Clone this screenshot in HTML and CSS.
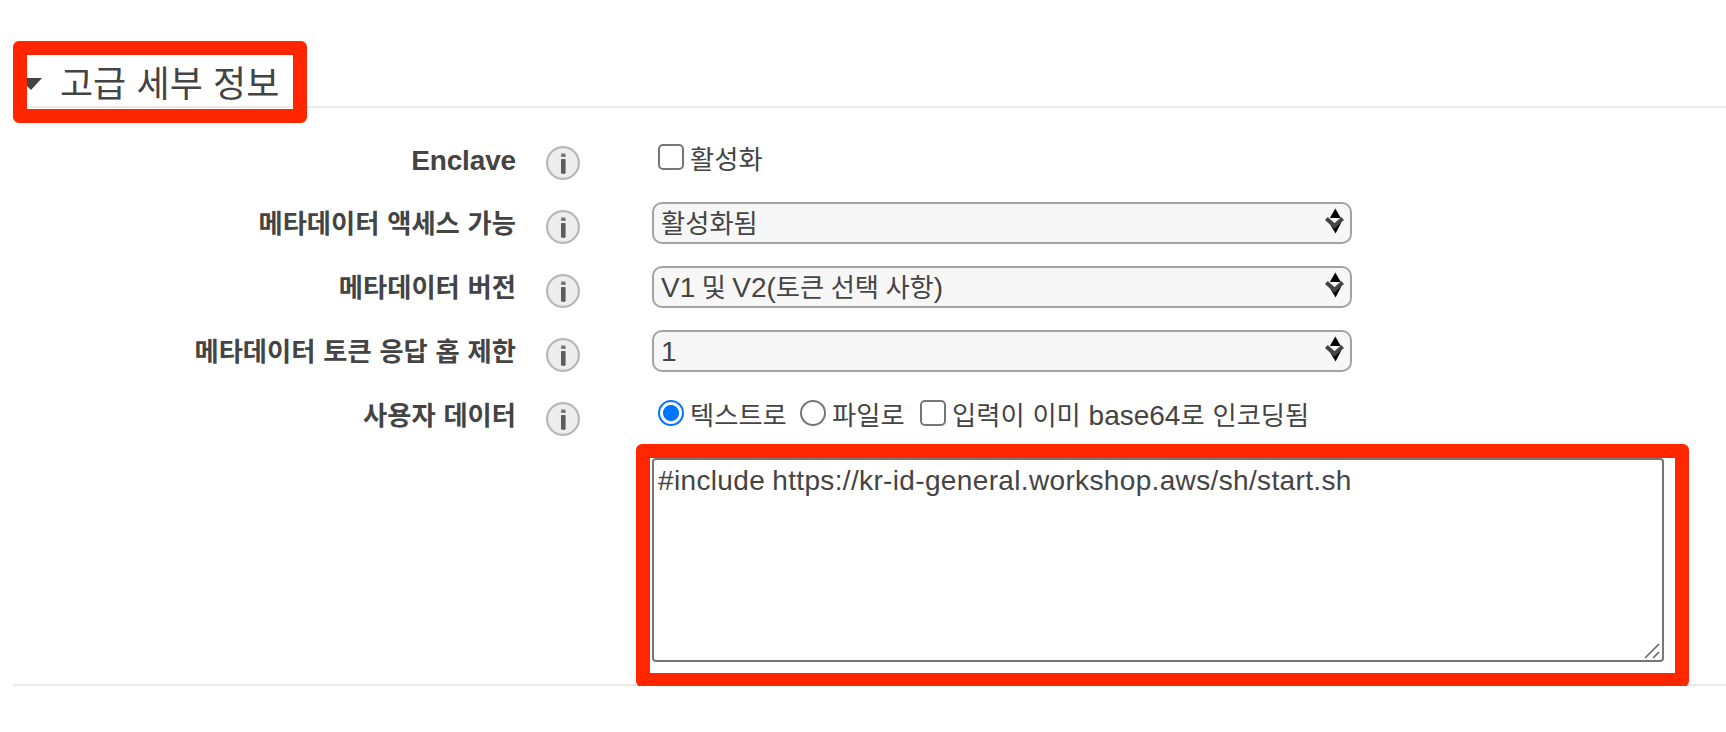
FILE: index.html
```html
<!DOCTYPE html>
<html lang="ko">
<head>
<meta charset="utf-8">
<title>고급 세부 정보</title>
<link rel="stylesheet" href="styles.css">
</head>
<body>
<svg class="defs" width="0" height="0">
  <symbol id="info" viewBox="0 0 34 34">
    <circle cx="17" cy="17" r="15.9" fill="#ededed" stroke="#b8b8b8" stroke-width="2.2"/>
    <rect x="15" y="7.6" width="4.6" height="3.4" rx="1" fill="#777"/>
    <rect x="15" y="13" width="4.6" height="14.8" rx="1" fill="#5c5c5c"/>
  </symbol>
  <symbol id="arrows" viewBox="0 0 20 26">
    <path d="M10.3 0.5 15.8 10H4.8z" fill="#000"/>
    <path d="M4 14.5H16.3L10.6 25.5z" fill="#000"/>
    <path d="M4 10H16L10 16z" fill="#f7f7f7"/>
    <path d="M1.4 10.6 9.5 18 17.6 10.6" fill="none" stroke="#444" stroke-width="4"/>
  </symbol>
</svg>
<section class="panel">
  <header class="head">
    <svg class="caret" width="18" height="12" viewBox="0 0 18 12"><path d="M0 0H18L7 12 0 5z" fill="#444"/></svg>
    <h1 class="title">고급 세부 정보</h1>
    <div class="mark mark-title"></div>
  </header>
  <div class="row">
    <div class="label latin">Enclave</div>
    <svg class="info"><use href="#info"/></svg>
    <div class="options"><input class="box" type="checkbox"><span class="opt">활성화</span></div>
  </div>
  <div class="row">
    <div class="label">메타데이터 액세스 가능</div>
    <svg class="info"><use href="#info"/></svg>
    <div class="select"><span>활성화됨</span><svg class="arrows"><use href="#arrows"/></svg></div>
  </div>
  <div class="row">
    <div class="label">메타데이터 버전</div>
    <svg class="info"><use href="#info"/></svg>
    <div class="select"><span><span class="latin">V1</span> 및 <span class="latin">V2(</span>토큰 선택 사항<span class="latin">)</span></span><svg class="arrows"><use href="#arrows"/></svg></div>
  </div>
  <div class="row">
    <div class="label">메타데이터 토큰 응답 홉 제한</div>
    <svg class="info"><use href="#info"/></svg>
    <div class="select"><span class="latin">1</span><svg class="arrows"><use href="#arrows"/></svg></div>
  </div>
  <div class="row">
    <div class="label">사용자 데이터</div>
    <svg class="info"><use href="#info"/></svg>
    <div class="options">
      <input class="box radio" type="radio" name="src" checked><span class="opt opt-text">텍스트로</span>
      <input class="box radio" type="radio" name="src"><span class="opt opt-file">파일로</span>
      <input class="box" type="checkbox"><span class="opt">입력이 이미 <span class="latin">base64</span>로 인코딩됨</span>
    </div>
  </div>
  <div class="data">
    <div class="area">#include https://kr-id-general.workshop.aws/sh/start.sh
      <svg class="grip" width="16" height="16" viewBox="0 0 16 16"><path d="M1 15 15 1M9 15 15 9" stroke="#666" stroke-width="1.6"/></svg>
    </div>
    <div class="mark mark-data"></div>
  </div>
</section>
</body>
</html>
```

FILE: styles.css
```css
* { box-sizing: border-box; }
body {
  margin: 0;
  background: #fff;
  color: #444;
  font-family: "Liberation Sans", "Noto Sans CJK KR", sans-serif;
  font-size: 26.3px;
  line-height: 42px;
  word-spacing: 0.5px;
  overflow: hidden;
}
.defs { position: absolute; }
.panel {
  height: 686px;
  margin-left: 13px;
  border-bottom: 2px solid #eaeaea;
}
.head {
  position: relative;
  display: flex;
  align-items: center;
  height: 108px;
  padding: 63px 0 0 11px;
  border-bottom: 2px solid #eaeaea;
}
.caret { margin-top: -1px; }
.title {
  margin: 0 0 0 18px;
  font-size: 36px;
  font-weight: 400;
  line-height: 48px;
  word-spacing: 0.3px;
}
.mark {
  position: absolute;
  border: 14px solid #ff2600;
  border-radius: 6px;
}
.mark-title { left: 0; top: 41px; width: 294px; height: 82px; }
.row {
  display: flex;
  height: 42px;
  margin-bottom: 22px;
}
.head + .row { margin-top: 30px; }
.label {
  width: 503px;
  padding-top: 1px;
  text-align: right;
  font-weight: 700;
  white-space: nowrap;
}
.latin { font-size: 28px; }
.label.latin { padding-top: 2px; letter-spacing: -0.15px; }
.info {
  width: 34px;
  height: 34px;
  margin: 8px 72px 0 30px;
}
.select {
  display: flex;
  justify-content: space-between;
  width: 700px;
  height: 42px;
  padding: 0 5px 0 7px;
  border: 2px solid #a2a2a2;
  border-radius: 10px;
  background: #f7f7f7;
  line-height: 40px;
  word-spacing: -0.9px;
}
.arrows { width: 20px; height: 26px; margin-top: 4px; }
.options { display: flex; padding-left: 6px; white-space: nowrap; }
.box {
  appearance: none;
  flex: none;
  width: 26px;
  height: 26px;
  margin: 6px 6px 0 0;
  border: 2px solid #767676;
  border-radius: 5px;
  background: #fff;
}
.radio { border-radius: 50%; }
.radio:checked {
  border-color: #0075ff;
  background: radial-gradient(circle, #0075ff 7.6px, #fff 8.4px);
}
.opt { padding-top: 1px; }
.opt-text { width: 110px; }
.opt-file { width: 88px; }
.data { position: relative; margin: -22px 0 0 623px; padding: 22px 0 0 16px; }
.area {
  position: relative;
  width: 1012px;
  height: 204px;
  padding: 0 4px;
  border: 2px solid #767676;
  border-radius: 4px;
  font-size: 28px;
  letter-spacing: 0.35px;
  word-spacing: -1px;
  white-space: nowrap;
}
.grip { position: absolute; right: 2px; bottom: 1px; }
.mark-data { left: 0; top: 8px; width: 1053px; height: 243px; }
```
